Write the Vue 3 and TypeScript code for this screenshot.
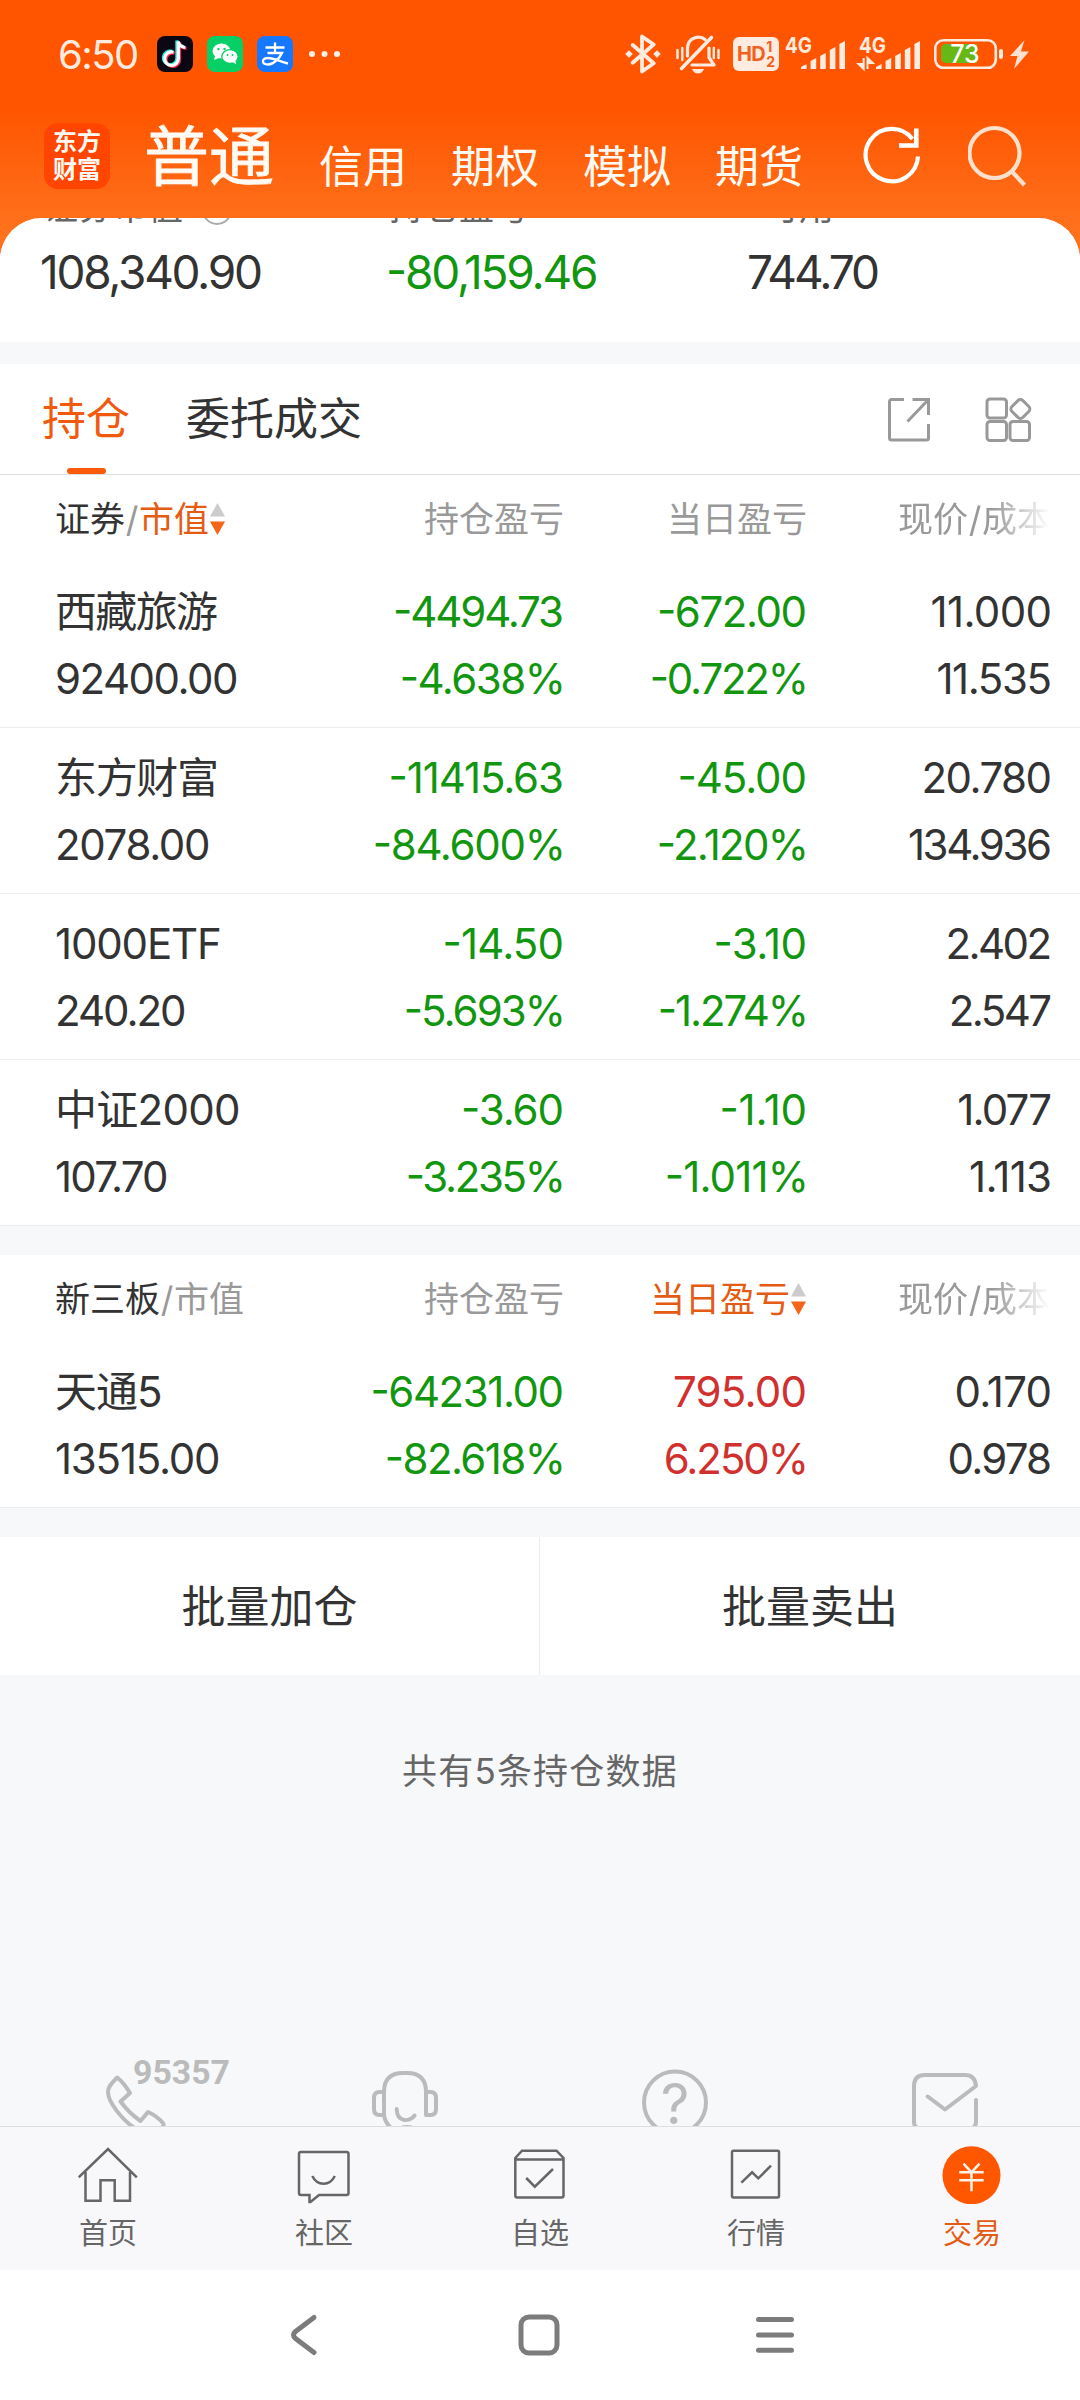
<script setup lang="ts">
import type { Directive } from 'vue'

type Tone = 'down' | 'up' | 'plain'
interface Figure { text: string; width: number }
interface Holding {
  name: Figure
  value: Figure
  profit: [Figure, Figure]
  today: [Figure, Figure]
  price: [Figure, Figure]
  todayTone: Tone
}

const f = (text: string, width: number): Figure => ({ text, width })

// Tightens or loosens the tracking so a string fills the width given for it.
const vFit: Directive<HTMLElement, number> = {
  mounted(el, binding) {
    const style = getComputedStyle(el)
    const ctx = document.createElement('canvas').getContext('2d')
    const text = el.textContent ?? ''
    if (!ctx || text.length < 2) return
    ctx.font = `${style.fontWeight} ${style.fontSize} ${style.fontFamily}`
    const m = ctx.measureText(text)
    const ink = m.actualBoundingBoxLeft + m.actualBoundingBoxRight
    const spacing = (binding.value - ink) / (text.length - 1)
    el.style.letterSpacing = `${spacing.toFixed(3)}px`
    // The percent sign has a wider side bearing than the digits above it.
    const hang = text.endsWith('%') ? 2 : 0
    el.style.marginRight = `${(-spacing - hang).toFixed(3)}px`
  },
}

const accounts = ['信用', '期权', '模拟', '期货']

const stocks: Holding[] = [
  {
    name: f('西藏旅游', 160), value: f('92400.00', 179),
    profit: [f('-4494.73', 167), f('-4.638%', 160)],
    today: [f('-672.00', 145.5), f('-0.722%', 153)],
    price: [f('11.000', 118), f('11.535', 113)],
    todayTone: 'down',
  },
  {
    name: f('东方财富', 159), value: f('2078.00', 150),
    profit: [f('-11415.63', 171.5), f('-84.600%', 187)],
    today: [f('-45.00', 125), f('-2.120%', 146)],
    price: [f('20.780', 125), f('134.936', 141)],
    todayTone: 'down',
  },
  {
    name: f('1000ETF', 164), value: f('240.20', 126),
    profit: [f('-14.50', 117), f('-5.693%', 156)],
    today: [f('-3.10', 89), f('-1.274%', 145)],
    price: [f('2.402', 101), f('2.547', 98.5)],
    todayTone: 'down',
  },
  {
    name: f('中证2000', 179), value: f('107.70', 110),
    profit: [f('-3.60', 98.5), f('-3.235%', 154)],
    today: [f('-1.10', 83), f('-1.011%', 138)],
    price: [f('1.077', 92), f('1.113', 80)],
    todayTone: 'down',
  },
]

const otc: Holding[] = [
  {
    name: f('天通5', 105), value: f('13515.00', 162),
    profit: [f('-64231.00', 189), f('-82.618%', 175)],
    today: [f('795.00', 129.5), f('6.250%', 139)],
    price: [f('0.170', 93), f('0.978', 100.5)],
    todayTone: 'up',
  },
]

const sections = [
  { title: '证券', sortBy: 'value', rows: stocks },
  { title: '新三板', sortBy: 'today', rows: otc },
]

const bars = [5, 11, 16, 22, 28]
</script>

<template>
  <div class="screen">
    <header class="top">
      <div class="status">
        <span v-fit="77" class="time">6:50</span>
        <svg class="app" width="36" height="36" viewBox="0 0 36 36">
          <rect width="36" height="36" rx="8" fill="#0b0713" />
          <g fill="none" stroke-width="3.200">
            <path d="M16.500 16.200a6.800 6.800 0 1 0 4.800 6V5.500c.6 3.600 2.800 5.500 7 6" stroke="#25e8e2" transform="translate(-1.400 -.9)" />
            <path d="M16.500 16.200a6.800 6.800 0 1 0 4.800 6V5.500c.6 3.600 2.800 5.500 7 6" stroke="#fb2c55" transform="translate(1.200 .9)" />
            <path d="M16.500 16.200a6.800 6.800 0 1 0 4.800 6V5.500c.6 3.600 2.800 5.500 7 6" stroke="#fff" />
          </g>
        </svg>
        <svg class="app" width="36" height="36" viewBox="0 0 36 36">
          <rect width="36" height="36" rx="8" fill="#06cf66" />
          <ellipse cx="14.500" cy="15" rx="9" ry="7.500" fill="#fff" />
          <path d="M8 20l-1 4 5-2z" fill="#fff" />
          <ellipse cx="23" cy="20.500" rx="8.200" ry="6.800" fill="#fff" stroke="#06cf66" stroke-width="1.300" />
          <path d="M25 26l4 2-.5-4z" fill="#fff" />
          <g fill="#06cf66"><circle cx="11.500" cy="13" r="1.200" /><circle cx="17.500" cy="13" r="1.200" /><circle cx="20.500" cy="19" r="1" /><circle cx="25.500" cy="19" r="1" /></g>
        </svg>
        <svg class="app" width="36" height="36" viewBox="0 0 36 36">
          <rect width="36" height="36" rx="8" fill="#1677ff" />
          <path d="M8.500 11.500h19M18 6.500v10M10.500 17h14.500c-2.500 5-8 11.500-14 11.500-6.500 0-7-6.500 0-6.500 7 0 12 4 20 5.500" fill="none" stroke="#fff" stroke-width="2.300" />
        </svg>
        <svg class="more" width="32" height="8" viewBox="0 0 32 8"><g fill="#fff0e6"><circle cx="4" cy="4" r="3" /><circle cx="16.500" cy="4" r="3" /><circle cx="29" cy="4" r="3" /></g></svg>

        <div class="sys">
          <svg width="36" height="40" viewBox="0 0 36 40">
            <path d="M7.700 11L28.700 29.300 17 37.500V2.500L28.700 10.500 7.700 28.700" fill="none" stroke="#ffebdf" stroke-width="3.800" stroke-linejoin="round" stroke-linecap="round" />
            <path d="M4 16.200l3.800 3.800L4 23.800.2 20zM32 16.200l3.800 3.800-3.800 3.800-3.800-3.800z" fill="#ffebdf" />
          </svg>
          <svg class="bell" width="44" height="40" viewBox="0 0 44 40">
            <g fill="none" stroke="#ffebdf" stroke-width="3.200" stroke-linecap="round">
              <path d="M35.500 3.500L5.500 34.500" stroke-width="3.600" />
              <path d="M11.500 22v-7.500C11.500 3 24 1 29 5.500M33 14v9.500l5 7.500H16" stroke-linejoin="round" />
              <path d="M1.500 16v8M6.300 14v12M37.800 14v10M42.500 16v8" stroke-width="2.400" />
            </g>
            <path d="M16 35h12q-2 4.500-6 4.500T16 35z" fill="#ffebdf" />
          </svg>
          <div class="hd"><span class="hd-main">HD</span><span class="hd-num"><i>1</i><i>2</i></span></div>
          <svg class="sig1" width="60" height="40" viewBox="0 0 60 40">
            <text x="0" y="18.500" class="g4" textLength="27" lengthAdjust="spacingAndGlyphs">4G</text>
            <path v-for="(h, i) in bars" :key="i" :d="`M${16 + i * 9.600} 35v${-h + 3}l5.600-3v${h}z`" fill="#ffebdf" />
          </svg>
          <svg class="sig2" width="62" height="40" viewBox="0 0 62 40">
            <text x="1" y="18.500" class="g4" textLength="27" lengthAdjust="spacingAndGlyphs">4G</text>
            <path d="M5.700 24v11M5.700 35L.5 30h5zM9.500 35V24M9.500 24l5.200 5h-5z" fill="#ffebdf" stroke="#ffebdf" stroke-width="2" />
            <path v-for="(h, i) in bars" :key="i" :d="`M${18 + i * 9.600} 35v${-h + 3}l5.600-3v${h}z`" fill="#ffebdf" />
          </svg>
          <svg class="batt" width="69" height="40" viewBox="0 0 69 40">
            <rect x="1.300" y="6.300" width="60.500" height="27.500" rx="8" fill="none" stroke="#ffebdf" stroke-width="2.600" />
            <path d="M12 10h31v19H12a5 5 0 0 1-5-5v-9a5 5 0 0 1 5-5z" fill="#66b814" />
            <rect x="65" y="15" width="4" height="10" rx="2" fill="#ffebdf" />
            <text x="31" y="28.800" text-anchor="middle" class="pct">73</text>
          </svg>
          <svg class="bolt" width="19" height="40" viewBox="0 0 19 40"><path d="M14.500 6L0 22h7.500L4 35 19 17.500h-8z" fill="#ffe1d2" /></svg>
        </div>
      </div>

      <nav class="accounts">
        <div class="logo"><span>东方</span><span>财富</span></div>
        <b class="current">普通</b>
        <span v-for="a in accounts" :key="a" class="account">{{ a }}</span>
        <svg class="refresh" width="60" height="62" viewBox="0 0 60 62">
          <g fill="none" stroke="#fff" stroke-width="4.200"><path d="M56 32.500A26.200 26.200 0 1 1 50.500 15" /><path d="M54.300 4.500v17H37" stroke-width="4.600" /></g>
        </svg>
        <svg class="search" width="60" height="62" viewBox="0 0 60 62">
          <g fill="none" stroke="#ffe0cc" stroke-width="4.200"><circle cx="26.500" cy="28" r="25" /><path d="M43.500 46l13 14" /></g>
        </svg>
      </nav>
    </header>

    <main class="body">
      <section class="summary">
        <div class="sum a">
          <div class="label">证券市值<svg width="32" height="32" viewBox="0 0 32 32"><circle cx="16" cy="16" r="14" fill="none" stroke="#aaa" stroke-width="2" /></svg></div>
          <span v-fit="219" class="big">108,340.90</span>
        </div>
        <div class="sum b"><div class="label">持仓盈亏</div><span v-fit="207" class="big down">-80,159.46</span></div>
        <div class="sum c"><div class="label">可用</div><span v-fit="129" class="big">744.70</span></div>
      </section>

      <section class="panel tabs">
        <div class="tab on">持仓</div>
        <div class="tab">委托成交</div>
        <svg class="export" width="44" height="46" viewBox="0 0 44 46">
          <path d="M17 2.500H4.500a2 2 0 0 0-2 2v36.500a2 2 0 0 0 2 2h35a2 2 0 0 0 2-2V27M25.500 2.500h16V18M41 3L20.500 24.500" fill="none" stroke="#999" stroke-width="3" />
        </svg>
        <svg class="grid" width="48" height="46" viewBox="0 0 48 46">
          <g fill="none" stroke="#999" stroke-width="3">
            <rect x="2" y="2" width="19.500" height="19" rx="3" /><rect x="2" y="24.500" width="19.500" height="19" rx="3" /><rect x="25" y="24.500" width="19.500" height="19" rx="3" />
            <rect x="27.700" y="4.300" width="15.400" height="15.400" rx="3.500" transform="rotate(45 35.400 12)" />
          </g>
        </svg>
      </section>

      <section v-for="s in sections" :key="s.title" class="panel table">
        <div class="head">
          <div class="c0">
            <em>{{ s.title }}</em><span class="slash">/</span><span :class="{ sorted: s.sortBy === 'value' }">市值</span>
            <svg v-if="s.sortBy === 'value'" width="17" height="34" viewBox="0 0 17 34"><path d="M8.500 1L16 14.500H1z" fill="#ccc" /><path d="M1 19.500h15L8.500 33z" fill="#f4651a" /></svg>
          </div>
          <div class="c1">持仓盈亏</div>
          <div class="c2" :class="{ sorted: s.sortBy === 'today' }">
            当日盈亏<svg v-if="s.sortBy === 'today'" width="17" height="34" viewBox="0 0 17 34"><path d="M8.500 1L16 14.500H1z" fill="#ccc" /><path d="M1 19.500h15L8.500 33z" fill="#f4651a" /></svg>
          </div>
          <div class="c3 fade">现价<span class="slash">/</span>成本</div>
        </div>
        <div v-for="r in s.rows" :key="r.name.text" class="row">
          <div class="c0"><span v-fit="r.name.width">{{ r.name.text }}</span><span v-fit="r.value.width">{{ r.value.text }}</span></div>
          <div class="c1 down"><span v-for="x in r.profit" :key="x.text" v-fit="x.width">{{ x.text }}</span></div>
          <div class="c2" :class="r.todayTone"><span v-for="x in r.today" :key="x.text" v-fit="x.width">{{ x.text }}</span></div>
          <div class="c3"><span v-for="x in r.price" :key="x.text" v-fit="x.width">{{ x.text }}</span></div>
        </div>
      </section>

      <section class="batch"><button>批量加仓</button><button>批量卖出</button></section>
      <p class="count">共有5条持仓数据</p>

      <section class="service">
        <svg width="270" height="86" viewBox="0 0 270 86">
          <text x="133" y="44" class="hotline" textLength="97" lengthAdjust="spacingAndGlyphs">95357</text>
          <path d="M136 89C122 80 108 62 108 52 108 46 113 42 117.300 37.500Q124 43 130 53L120.500 61.500Q129 73 140.500 81L148 72Q157 76 163 83 165 86 160 89" />
        </svg>
        <svg width="270" height="86" viewBox="0 0 270 86">
          <path d="M121 88Q114 81 114 74V52Q114 33 133 33H137Q156 33 156 52V75H160.500Q166 75 166 69V58Q166 52 160.500 52H156M114 52H109.500Q104 52 104 58V69Q104 75 109.500 75H114M126.700 69C127 83 140 82 144.500 75.500M133 87.500Q137 86.500 141 87.500" />
        </svg>
        <svg width="270" height="86" viewBox="0 0 270 86">
          <circle cx="135" cy="62.500" r="31" /><text x="135" y="83.500" text-anchor="middle" class="q">?</text>
        </svg>
        <svg width="270" height="86" viewBox="0 0 270 86">
          <path d="M107 88Q104 86 104 82V46Q104 35 115 35H155Q165 35 166 46L135 69.500 117.700 56.500M166 60V82Q166 86 163 88" />
        </svg>
      </section>
    </main>

    <nav class="tabbar">
      <div class="item">
        <svg width="60" height="60" viewBox="0 0 60 60"><path d="M.7 33.300L30 5l28.800 28.300M7.500 28v28.700H22.500V36.300H36.700V56.700H52V28" /></svg>首页
      </div>
      <div class="item">
        <svg width="60" height="60" viewBox="0 0 60 60"><path d="M7 8h45.500a2 2 0 0 1 2 2v39a2 2 0 0 1-2 2H25l-8.500 7h-1V51H7a2 2 0 0 1-2-2V10a2 2 0 0 1 2-2zM18.300 32c5 10.300 17.500 10.300 22.500 0" /></svg>社区
      </div>
      <div class="item">
        <svg width="60" height="60" viewBox="0 0 60 60"><path d="M5.300 14L12 6.700H46.500L53.500 14V51.500a2 2 0 0 1-2 2H7.300a2 2 0 0 1-2-2zM5.300 15.500H53.500M16.200 34l8.600 8.700L43 25" /></svg>自选
      </div>
      <div class="item">
        <svg width="60" height="60" viewBox="0 0 60 60"><rect x="6" y="6.800" width="47" height="46.800" rx="1.500" /><path d="M15.400 38.700L26.100 28.300l6.200 6L45 21.700" /></svg>行情
      </div>
      <div class="item active">
        <svg width="60" height="60" viewBox="0 0 60 60"><circle cx="29.500" cy="31.300" r="29" fill="#ff5600" stroke="none" /><path d="M21.500 19.700l8 8.600 8-8.600M29.500 28.300v19M17.200 28.300h24.500M17.200 36.300h24.500" stroke="#fff3ea" /></svg>交易
      </div>
    </nav>

    <footer class="sysnav">
      <svg width="44" height="44" viewBox="0 0 44 44"><path d="M32 4.500L13.500 18.500q-4 3.500 0 7L32 39.500" /></svg>
      <svg width="44" height="44" viewBox="0 0 44 44"><rect x="4" y="4" width="36" height="36" rx="8" /></svg>
      <svg width="44" height="44" viewBox="0 0 44 44"><path d="M5.500 6.500H38.500M5.500 22H38.500M5.500 37.300H38.500" /></svg>
    </footer>
  </div>
</template>

<style>
body { margin: 0; background: #fff; }
</style>

<style scoped>
.screen {
  width: 1080px; height: 2400px; overflow: hidden; display: flex; flex-direction: column;
  font-family: Inter, "Noto Sans CJK SC", sans-serif; color: #333;
  background: linear-gradient(#ff5500 0, #ff5500 108px, #ff6f1a 218px, #ff7420 262px, #f7f8fa 262px);
}
svg { display: block; flex: none; }
.top { height: 218px; flex: none; }
.status { height: 108px; display: flex; align-items: center; padding-left: 58px; box-sizing: border-box; color: #ffebdf; }
.time { font-size: 40px; line-height: 40px; margin-top: 1px; white-space: nowrap; }
.app { margin-left: 14px; }
.time + .app { margin-left: 18px; }
.more { margin-left: 15px; }
.sys { display: flex; align-items: center; margin-left: auto; padding-right: 51px; }
.bell { margin-left: 15px; }
.hd { margin-left: 13px; width: 46px; height: 34px; border-radius: 6px; background: #ffebdf; color: #f2601c; display: flex; align-items: center; justify-content: center; font-weight: 700; gap: 1px; }
.hd-main { font-size: 20px; line-height: 24px; letter-spacing: -.5px; }
.hd-num { display: flex; flex-direction: column; font-size: 14px; line-height: 15px; }
.hd-num i { font-style: normal; }
.sig1 { margin-left: 6px; overflow: visible; }
.sig2 { margin-left: 13px; overflow: visible; }
.batt { margin-left: 14px; }
.bolt { margin-left: 7px; }
.g4 { font: 700 22px Inter, sans-serif; fill: #ffebdf; }
.pct { font: 500 25px Inter, sans-serif; fill: #fff; }

.accounts { height: 110px; display: flex; align-items: flex-start; padding-left: 44px; color: #fffaf3; }
.logo { width: 66px; height: 66px; margin-top: 15px; border-radius: 14px; background: #ff4500; display: flex; flex-direction: column; align-items: center; justify-content: center; font-size: 24px; line-height: 28px; font-weight: 700; flex: none; }
.current { font-size: 65px; line-height: 66px; font-weight: 400; -webkit-text-stroke: .8px currentColor; margin: 16px 0 0 34px; width: 133px; flex: none; }
.account { font-size: 44px; line-height: 44px; margin-top: 37px; width: 88px; margin-right: 44px; flex: none; }
.current + .account { margin-left: 42px; }
.refresh { margin: 16px 0 0 15px; }
.search { margin: 17px 0 0 46px; }

.body { height: 1908px; flex: none; background: #f7f8fa; border-radius: 42px 42px 0 0; overflow: hidden; display: flex; flex-direction: column; }
.summary { height: 124px; flex: none; background: #fff; display: flex; padding-left: 40px; box-sizing: border-box; margin-bottom: 22px; }
.sum { display: flex; flex-direction: column; align-items: flex-start; margin-top: -31px; }
.a { width: 346px; }
.b { width: 361px; }
.label { font-size: 35px; line-height: 40px; height: 40px; color: #666; display: flex; align-items: center; padding-left: 3px; white-space: nowrap; }
.c .label { padding-left: 17px; }
.label svg { margin: 5px 0 0 18px; }
.big { font-size: 46px; line-height: 56px; margin-top: 17px; white-space: nowrap; }
.big, .row span { font-feature-settings: "case"; }
.down { color: #12960f; }
.up { color: #d0312f; }
.plain { color: #333; }

.panel { background: #fff; flex: none; }
.tabs { height: 110px; border-bottom: 1px solid #dedede; display: flex; padding-left: 42px; align-items: flex-start; }
.tab { font-size: 44px; line-height: 44px; padding-top: 33px; height: 77px; margin-right: 56px; display: flex; flex-direction: column; align-items: center; justify-content: space-between; }
.on { color: #f0590e; }
.on::after { content: ""; width: 39px; height: 6px; border-radius: 3px; background: #fa5a0a; }
.export { margin: 33px 0 0 auto; }
.grid { margin: 33px 47px 0 54px; }

.table { margin-bottom: 29px; }
.head { height: 87px; display: flex; align-items: center; color: #999; font-size: 35px; line-height: 40px; white-space: nowrap; }
.head em { font-style: normal; color: #333; }
.head > div { display: flex; align-items: center; }
.slash { width: 14px; text-align: center; }
.sorted { color: #e45b14; }
.c0 { width: 285px; padding-left: 55px; box-sizing: border-box; align-items: flex-start; }
.c1 { width: 279px; }
.c2 { width: 243px; }
.c3 { width: 245px; }
.head .c1, .head .c2, .head .c3 { justify-content: flex-end; }
.fade { -webkit-mask-image: linear-gradient(90deg, #000 185px, transparent 243px); mask-image: linear-gradient(90deg, #000 185px, transparent 243px); }
.row { height: 166px; box-sizing: border-box; border-bottom: 1px solid #ececee; display: flex; padding-top: 16px; font-size: 42px; white-space: nowrap; }
.row > div { display: flex; flex-direction: column; align-items: flex-end; line-height: 67px; }
.row > div.c0 { align-items: flex-start; }
.row span { display: block; height: 67px; }

.batch { height: 138px; flex: none; background: #fff; display: flex; }
.batch button { width: 539px; box-sizing: border-box; border: 0; padding: 0 0 5px; background: none; font: inherit; font-size: 44px; color: #333; }
.batch button + button { width: 541px; border-left: 1px solid #ececee; }
.count { margin: 0; padding-top: 74px; height: 291px; box-sizing: border-box; flex: none; text-align: center; font-size: 35px; line-height: 44px; letter-spacing: 1.200px; color: #666; }
.service { height: 86px; flex: none; display: flex; margin-top: 74px; }
.service svg { fill: none; stroke: #bbb; stroke-width: 4; stroke-linecap: round; stroke-linejoin: round; }
.service .hotline { font: 700 34px Roboto, sans-serif; fill: #bbb; stroke: none; }
.service .q { font: 400 56px Inter, sans-serif; fill: #bbb; stroke: none; }

.tabbar { height: 144px; flex: none; box-sizing: border-box; border-top: 1px solid #dedede; background: #f8f8fb; display: flex; }
.item { width: 216px; display: flex; flex-direction: column; align-items: center; padding-top: 17px; font-size: 29px; line-height: 34px; gap: 13px; color: #666; }
.item svg { fill: none; stroke: #666; stroke-width: 2.500; }
.active { color: #e45b14; }
.sysnav { height: 130px; flex: none; background: #fff; display: flex; align-items: center; justify-content: center; gap: 191.500px; padding-right: 2px; box-sizing: border-box; }
.sysnav svg { fill: none; stroke: #7c7c7c; stroke-width: 5; stroke-linecap: round; stroke-linejoin: round; }
</style>
